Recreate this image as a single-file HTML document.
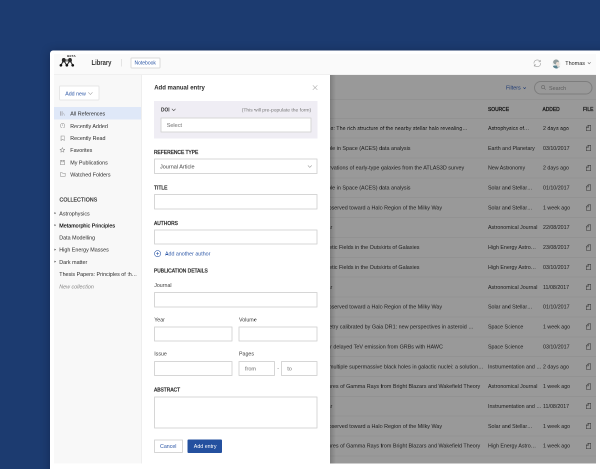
<!DOCTYPE html>
<html><head><meta charset="utf-8">
<style>
*{box-sizing:border-box;margin:0;padding:0}
html,body{width:600px;height:469px;overflow:hidden}
body{background:#1c3b70;font-family:"Liberation Sans",sans-serif;font-size:5.3px;color:#333;position:relative}
.abs,.t,.box,.rl,.fi{position:absolute}
.t{line-height:1;white-space:nowrap;transform:translateY(-50%)}
.win{left:50px;top:50.5px;width:560px;height:430px;background:#fff;border-radius:3px;box-shadow:0 1px 10px rgba(0,0,25,.32)}
.app{left:54px;top:54px;width:542px;height:409.5px;background:#f7f7f7}
.hdr{left:54px;top:54px;width:542px;height:21px;background:#fafafa;border-bottom:1px solid #f0f0f0}
.side{left:54px;top:75px;width:88px;height:388.5px;background:#f8f8f8}
.tbl{left:330px;top:75px;width:266px;height:388.5px;background:#fff;overflow:hidden}
.ov{left:330px;top:75px;width:266px;height:388.5px;background:rgba(0,0,0,.4)}
.ovs{left:330px;top:75px;width:6px;height:388.5px;background:linear-gradient(90deg,rgba(0,0,0,.18),rgba(0,0,0,0))}
.panel{left:141px;top:75px;width:189px;height:388.5px;background:#fff;border-left:1px solid #eee}
.rl{left:330px;width:266px;height:1px;background:#f3f3f3;transform:translateY(-50%)}
.box{background:#fff;border:1px solid #d6d6d6;border-radius:.6px}
.lbl{font-weight:normal;-webkit-text-stroke:.32px #333;font-size:5.3px;color:#333;transform:translateY(-50%) scaleX(.925);transform-origin:0 50%}
.sm{font-size:5.3px;color:#3c3c3c}
.fi{left:586px;width:5px;height:6px}
.nav{font-size:5.36px;color:#2b2b2b;left:70.3px}
.col{font-size:5.36px;color:#2b2b2b;left:59.3px}
.blue{color:#2a55a5}
.ph{color:#848484;-webkit-text-stroke:.1px #848484}
#w{position:absolute;left:0;top:0;width:600px;height:469px;overflow:hidden;zoom:2;transform:scale(.5);transform-origin:0 0;will-change:transform;background:#1c3b70}
.tt{font-size:5.4px}
</style></head><body><div id="w">
<div class="abs win"></div>
<div class="abs app"></div>
<div class="abs hdr"></div>

<!-- header -->
<svg class="abs" style="left:59px;top:57px;width:16px;height:11px" viewBox="0 0 16 11">
 <g stroke="#2a2a2a" stroke-width="1.05" stroke-linecap="round" fill="none">
  <path d="M1.9 8.3L4.7 3.4M4.7 3.4L7.85 8.3M7.85 8.3L11 3.4M11 3.4L13.75 8.3"/>
 </g>
 <rect x="5" y="2.2" width="6" height="2.4" fill="#8a8a8a"/>
 <ellipse cx="4.75" cy="3.2" rx="1.9" ry="2.2" fill="#2a2a2a"/><ellipse cx="11" cy="3.2" rx="1.9" ry="2.2" fill="#2a2a2a"/>
 <circle cx="1.9" cy="8.3" r="1.35" fill="#111"/><circle cx="7.85" cy="8.3" r="1.35" fill="#111"/><circle cx="13.75" cy="8.3" r="1.35" fill="#111"/>
</svg>
<div class="t" style="left:67.1px;top:56.1px;font-size:3px;letter-spacing:.2px;font-weight:bold;color:#222">BETA</div>
<div class="t" id="lib" style="left:91.7px;top:62.6px;font-size:7px;font-weight:bold;color:#333;transform:translateY(-50%) scaleX(.84);transform-origin:0 50%">Library</div>
<div class="abs" style="left:121px;top:59px;width:1px;height:7.5px;background:#e4e4e4"></div>
<div class="box" style="left:130.3px;top:57.4px;width:30.3px;height:10.9px;border-color:#dadada;border-radius:1.2px"></div>
<div class="t blue" id="nb" style="left:134.5px;top:62.8px;font-size:5px">Notebook</div>

<!-- refresh -->
<svg class="abs" style="left:533px;top:58.8px;width:8.6px;height:8.6px" viewBox="0 0 16 16" fill="none" stroke="#a2a2a2" stroke-width="1.15" stroke-linecap="round" stroke-linejoin="round">
 <path d="M1.8 8A6.2 6.2 0 0 1 13.4 4.9M13.7 2.3V5.2H10.8"/><path d="M14.2 8A6.2 6.2 0 0 1 2.6 11.1M2.3 13.7V10.8H5.2"/>
</svg>
<!-- avatar -->
<svg class="abs" style="left:552.2px;top:58.8px;width:8.8px;height:9.8px" viewBox="0 0 17 19">
 <defs><clipPath id="av"><ellipse cx="8.5" cy="9.5" rx="8" ry="9"/></clipPath></defs>
 <g clip-path="url(#av)"><rect width="17" height="19" fill="#eef0ef"/>
 <ellipse cx="7.8" cy="5.8" rx="5.6" ry="4.8" fill="#929d9e"/>
 <ellipse cx="11" cy="9.8" rx="3.3" ry="3.9" fill="#e9dcd2"/>
 <path d="M0 19C0 13.5 3 12.5 7 12.5S13 14 13.5 19Z" fill="#58818f"/><path d="M9.5 13L12 18.5L15 13.5Z" fill="#e4dcd6"/><path d="M13 14.5C15 14.5 16.5 16 17 19H13Z" fill="#5d8796"/></g>
</svg>
<div class="t" id="thomas" style="left:565.3px;top:63.1px;font-size:5.45px;color:#222">Thomas</div>
<svg class="abs" style="left:587.6px;top:62px;width:3.4px;height:2.4px" viewBox="0 0 10 7" fill="none" stroke="#555" stroke-width="1.6"><path d="M1 1L5 5.5L9 1"/></svg>

<!-- sidebar -->
<div class="abs side"></div>
<div class="box" style="left:59px;top:85.4px;width:40.6px;height:15.2px;border-color:#e6e6e6;border-radius:1.2px"></div>
<div class="t blue" id="addnew" style="left:65.2px;top:93.4px;font-size:5.3px">Add new</div>
<svg class="abs" style="left:88px;top:92.1px;width:4.8px;height:2.9px" viewBox="0 0 10 6" fill="none" stroke="#999" stroke-width="1.05"><path d="M.6 .6L5 5.2L9.4 .6"/></svg>

<div class="abs" style="left:54px;top:107.2px;width:87.5px;height:12.4px;background:#dfe8f8"></div>
<div class="t nav" style="top:113.4px">All References</div>
<div class="t nav" style="top:125.8px">Recently Added</div>
<div class="t nav" style="top:138px">Recently Read</div>
<div class="t nav" style="top:150.1px">Favorites</div>
<div class="t nav" style="top:162.3px">My Publications</div>
<div class="t nav" style="top:174.4px">Watched Folders</div>
<!-- nav icons -->
<svg class="abs" style="left:60px;top:111px;width:5px;height:5px" viewBox="0 0 10 10" fill="none" stroke="#a9abb3" stroke-width="1.1"><path d="M1.5 .6V9.4" stroke-width="2.6"/><path d="M5.3 .6V9.4M7 3.8L9.2 9.4"/></svg>
<svg class="abs" style="left:59.8px;top:123.2px;width:5.2px;height:5.2px" viewBox="0 0 10 10" fill="none" stroke="#8a8a8a" stroke-width="1"><circle cx="5" cy="5" r="4.2"/><path d="M5 2.6V5.3"/></svg>
<svg class="abs" style="left:60.3px;top:135.3px;width:4.4px;height:5.6px" viewBox="0 0 8 10" fill="none" stroke="#8a8a8a" stroke-width="1"><path d="M1 .8H7V9L4 6.8L1 9Z"/></svg>
<svg class="abs" style="left:59.6px;top:147.2px;width:5.8px;height:5.8px" viewBox="0 0 12 12" fill="none" stroke="#8a8a8a" stroke-width="1.1" stroke-linejoin="round"><path d="M6 1.2L7.5 4.5L11 4.9L8.4 7.2L9.1 10.7L6 8.9L2.9 10.7L3.6 7.2L1 4.9L4.5 4.5Z"/></svg>
<svg class="abs" style="left:60px;top:159.6px;width:5px;height:5.6px" viewBox="0 0 9 10" fill="none" stroke="#8a8a8a" stroke-width="1"><path d="M.8 1.5H8.2V9.2H.8Z"/><path d="M3 .8V4.2H6.2V.8"/></svg>
<svg class="abs" style="left:59.8px;top:172px;width:5.6px;height:4.8px" viewBox="0 0 11 9" fill="none" stroke="#8a8a8a" stroke-width="1"><path d="M.8 1H4.2L5.2 2.2H10.2V8.2H.8Z"/></svg>

<div class="t" id="colls" style="left:59.5px;top:200.1px;font-size:5.2px;letter-spacing:.1px;color:#333;-webkit-text-stroke:.22px #333">COLLECTIONS</div>
<div class="t col" style="top:213.3px">Astrophysics</div>
<div class="t col" style="top:225.3px;color:#111;text-shadow:0 0 .3px #111">Metamorphic Principles</div>
<div class="t col" style="top:237.6px">Data Modelling</div>
<div class="t col" style="top:249.7px">High Energy Masses</div>
<div class="t col" style="top:261.8px">Dark matter</div>
<div class="t col" style="top:274.2px">Thesis Papers: Principles of th…</div>
<div class="t col" style="top:286.3px;font-style:italic;color:#868686">New collection</div>
<svg class="abs" style="left:54.3px;top:212.2px;width:1.5px;height:2.3px" viewBox="0 0 3 4"><path d="M0 0L3 2L0 4Z" fill="#444"/></svg>
<svg class="abs" style="left:54.3px;top:224.2px;width:1.5px;height:2.3px" viewBox="0 0 3 4"><path d="M0 0L3 2L0 4Z" fill="#444"/></svg>
<svg class="abs" style="left:54.3px;top:248.6px;width:1.5px;height:2.3px" viewBox="0 0 3 4"><path d="M0 0L3 2L0 4Z" fill="#444"/></svg>
<svg class="abs" style="left:54.3px;top:260.7px;width:1.5px;height:2.3px" viewBox="0 0 3 4"><path d="M0 0L3 2L0 4Z" fill="#444"/></svg>

<!-- table -->
<div class="abs tbl"></div>
<div class="rl" style="top:99.7px"></div>
<div class="rl" style="top:118.3px"></div>
<div class="t" id="filters" style="left:506px;top:87.7px;font-size:5.4px;color:#2f5fc0">Filters</div>
<svg class="abs" style="left:522.8px;top:86.8px;width:3.2px;height:2.2px" viewBox="0 0 10 7" fill="none" stroke="#2f5fc0" stroke-width="1.8"><path d="M1 1L5 5.5L9 1"/></svg>
<div class="abs" style="left:534px;top:81px;width:58.6px;height:13.4px;border:1px solid #d0d0d0;border-radius:7px"></div>
<svg class="abs" style="left:541px;top:85.2px;width:5px;height:5px" viewBox="0 0 10 10" fill="none" stroke="#b4b4b4" stroke-width="1.3"><circle cx="4.2" cy="4.2" r="3.2"/><path d="M6.6 6.6L9.4 9.4"/></svg>
<div class="t" style="left:549px;top:87.8px;font-size:5.4px;color:#9c9c9c">Search</div>
<div class="t lbl" style="left:488px;top:109px">SOURCE</div>
<div class="t lbl" style="left:542.6px;top:109px">ADDED</div>
<div class="t lbl" style="left:583px;top:109px">FILE</div>
<div class="rl" style="top:138.16px"></div>
<div class="t tt" style="top:127.93px;right:132.3px">of galaxies: The rich structure of the nearby stellar halo revealing…</div>
<div class="t" style="top:127.93px;left:488px">Astrophysics of…</div>
<div class="t" style="top:127.93px;left:543px">2 days ago</div>
<svg class="fi" style="top:125.13px" viewBox="0 0 10 12"><path d="M4.4 0.6H9.4V11.4H0.6V4.4Z" fill="none" stroke="#626262" stroke-width="1.05"/><path d="M0.9 4.9H4.9V0.9" fill="none" stroke="#626262" stroke-width="1"/></svg>
<div class="rl" style="top:158.02px"></div>
<div class="t tt" style="top:147.79px;right:189.5px">Atomic Clock Ensemble in Space (ACES) data analysis</div>
<div class="t" style="top:147.79px;left:488px">Earth and Planetary</div>
<div class="t" style="top:147.79px;left:543px">03/10/2017</div>
<svg class="fi" style="top:144.99px" viewBox="0 0 10 12"><path d="M4.4 0.6H9.4V11.4H0.6V4.4Z" fill="none" stroke="#626262" stroke-width="1.05"/><path d="M0.9 4.9H4.9V0.9" fill="none" stroke="#626262" stroke-width="1"/></svg>
<div class="rl" style="top:177.88px"></div>
<div class="t tt" style="top:167.65px;right:135.8px">Integral-field observations of early-type galaxies from the ATLAS3D survey</div>
<div class="t" style="top:167.65px;left:488px">New Astronomy</div>
<div class="t" style="top:167.65px;left:543px">2 days ago</div>
<svg class="fi" style="top:164.85px" viewBox="0 0 10 12"><path d="M4.4 0.6H9.4V11.4H0.6V4.4Z" fill="none" stroke="#626262" stroke-width="1.05"/><path d="M0.9 4.9H4.9V0.9" fill="none" stroke="#626262" stroke-width="1"/></svg>
<div class="rl" style="top:197.74px"></div>
<div class="t tt" style="top:187.51px;right:189.5px">Atomic Clock Ensemble in Space (ACES) data analysis</div>
<div class="t" style="top:187.51px;left:488px">Solar and Stellar…</div>
<div class="t" style="top:187.51px;left:543px">01/10/2017</div>
<svg class="fi" style="top:184.71px" viewBox="0 0 10 12"><path d="M4.4 0.6H9.4V11.4H0.6V4.4Z" fill="none" stroke="#626262" stroke-width="1.05"/><path d="M0.9 4.9H4.9V0.9" fill="none" stroke="#626262" stroke-width="1"/></svg>
<div class="rl" style="top:217.60px"></div>
<div class="t tt" style="top:207.37px;right:157.9px">Gamma-Ray Emission observed toward a Halo Region of the Milky Way</div>
<div class="t" style="top:207.37px;left:488px">Solar and Stellar…</div>
<div class="t" style="top:207.37px;left:543px">1 week ago</div>
<svg class="fi" style="top:204.57px" viewBox="0 0 10 12"><path d="M4.4 0.6H9.4V11.4H0.6V4.4Z" fill="none" stroke="#626262" stroke-width="1.05"/><path d="M0.9 4.9H4.9V0.9" fill="none" stroke="#626262" stroke-width="1"/></svg>
<div class="rl" style="top:237.46px"></div>
<div class="t tt" style="top:227.23px;right:267.7px">The Large Scale Structure of the Quasar</div>
<div class="t" style="top:227.23px;left:488px">Astronomical Journal</div>
<div class="t" style="top:227.23px;left:543px">22/08/2017</div>
<svg class="fi" style="top:224.43px" viewBox="0 0 10 12"><path d="M4.4 0.6H9.4V11.4H0.6V4.4Z" fill="none" stroke="#626262" stroke-width="1.05"/><path d="M0.9 4.9H4.9V0.9" fill="none" stroke="#626262" stroke-width="1"/></svg>
<div class="rl" style="top:257.32px"></div>
<div class="t tt" style="top:247.09px;right:180.6px">The Evolution of Magnetic Fields in the Outskirts of Galaxies</div>
<div class="t" style="top:247.09px;left:488px">High Energy Astro…</div>
<div class="t" style="top:247.09px;left:543px">23/08/2017</div>
<svg class="fi" style="top:244.29px" viewBox="0 0 10 12"><path d="M4.4 0.6H9.4V11.4H0.6V4.4Z" fill="none" stroke="#626262" stroke-width="1.05"/><path d="M0.9 4.9H4.9V0.9" fill="none" stroke="#626262" stroke-width="1"/></svg>
<div class="rl" style="top:277.18px"></div>
<div class="t tt" style="top:266.95px;right:180.6px">The Evolution of Magnetic Fields in the Outskirts of Galaxies</div>
<div class="t" style="top:266.95px;left:488px">High Energy Astro…</div>
<div class="t" style="top:266.95px;left:543px">03/10/2017</div>
<svg class="fi" style="top:264.15px" viewBox="0 0 10 12"><path d="M4.4 0.6H9.4V11.4H0.6V4.4Z" fill="none" stroke="#626262" stroke-width="1.05"/><path d="M0.9 4.9H4.9V0.9" fill="none" stroke="#626262" stroke-width="1"/></svg>
<div class="rl" style="top:297.04px"></div>
<div class="t tt" style="top:286.81px;right:267.7px">The Large Scale Structure of the Quasar</div>
<div class="t" style="top:286.81px;left:488px">Astronomical Journal</div>
<div class="t" style="top:286.81px;left:543px">11/08/2017</div>
<svg class="fi" style="top:284.01px" viewBox="0 0 10 12"><path d="M4.4 0.6H9.4V11.4H0.6V4.4Z" fill="none" stroke="#626262" stroke-width="1.05"/><path d="M0.9 4.9H4.9V0.9" fill="none" stroke="#626262" stroke-width="1"/></svg>
<div class="rl" style="top:316.90px"></div>
<div class="t tt" style="top:306.67px;right:157.9px">Gamma-Ray Emission observed toward a Halo Region of the Milky Way</div>
<div class="t" style="top:306.67px;left:488px">Solar and Stellar…</div>
<div class="t" style="top:306.67px;left:543px">01/10/2017</div>
<svg class="fi" style="top:303.87px" viewBox="0 0 10 12"><path d="M4.4 0.6H9.4V11.4H0.6V4.4Z" fill="none" stroke="#626262" stroke-width="1.05"/><path d="M0.9 4.9H4.9V0.9" fill="none" stroke="#626262" stroke-width="1"/></svg>
<div class="rl" style="top:336.76px"></div>
<div class="t tt" style="top:326.53px;right:126.4px">Ground-based astrometry calibrated by Gaia DR1: new perspectives in asteroid …</div>
<div class="t" style="top:326.53px;left:488px">Space Science</div>
<div class="t" style="top:326.53px;left:543px">1 week ago</div>
<svg class="fi" style="top:323.73px" viewBox="0 0 10 12"><path d="M4.4 0.6H9.4V11.4H0.6V4.4Z" fill="none" stroke="#626262" stroke-width="1.05"/><path d="M0.9 4.9H4.9V0.9" fill="none" stroke="#626262" stroke-width="1"/></svg>
<div class="rl" style="top:356.62px"></div>
<div class="t tt" style="top:346.39px;right:157.1px">A dedicated search for delayed TeV emission from GRBs with HAWC</div>
<div class="t" style="top:346.39px;left:488px">Space Science</div>
<div class="t" style="top:346.39px;left:543px">03/10/2017</div>
<svg class="fi" style="top:343.59px" viewBox="0 0 10 12"><path d="M4.4 0.6H9.4V11.4H0.6V4.4Z" fill="none" stroke="#626262" stroke-width="1.05"/><path d="M0.9 4.9H4.9V0.9" fill="none" stroke="#626262" stroke-width="1"/></svg>
<div class="rl" style="top:376.48px"></div>
<div class="t tt" style="top:366.25px;right:116.5px">The final parsec problem of multiple supermassive black holes in galactic nuclei: a solution…</div>
<div class="t" style="top:366.25px;left:488px">Instrumentation and …</div>
<div class="t" style="top:366.25px;left:543px">2 days ago</div>
<svg class="fi" style="top:363.45px" viewBox="0 0 10 12"><path d="M4.4 0.6H9.4V11.4H0.6V4.4Z" fill="none" stroke="#626262" stroke-width="1.05"/><path d="M0.9 4.9H4.9V0.9" fill="none" stroke="#626262" stroke-width="1"/></svg>
<div class="rl" style="top:396.34px"></div>
<div class="t tt" style="top:386.11px;right:119.8px">Spectral Signatures of Gamma Rays from Bright Blazars and Wakefield Theory</div>
<div class="t" style="top:386.11px;left:488px">Astronomical Journal</div>
<div class="t" style="top:386.11px;left:543px">1 week ago</div>
<svg class="fi" style="top:383.31px" viewBox="0 0 10 12"><path d="M4.4 0.6H9.4V11.4H0.6V4.4Z" fill="none" stroke="#626262" stroke-width="1.05"/><path d="M0.9 4.9H4.9V0.9" fill="none" stroke="#626262" stroke-width="1"/></svg>
<div class="rl" style="top:416.20px"></div>
<div class="t tt" style="top:405.97px;right:267.7px">The Large Scale Structure of the Quasar</div>
<div class="t" style="top:405.97px;left:488px">Instrumentation and …</div>
<div class="t" style="top:405.97px;left:543px">11/08/2017</div>
<svg class="fi" style="top:403.17px" viewBox="0 0 10 12"><path d="M4.4 0.6H9.4V11.4H0.6V4.4Z" fill="none" stroke="#626262" stroke-width="1.05"/><path d="M0.9 4.9H4.9V0.9" fill="none" stroke="#626262" stroke-width="1"/></svg>
<div class="rl" style="top:436.06px"></div>
<div class="t tt" style="top:425.83px;right:157.9px">Gamma-Ray Emission observed toward a Halo Region of the Milky Way</div>
<div class="t" style="top:425.83px;left:488px">Solar and Stellar…</div>
<div class="t" style="top:425.83px;left:543px">1 week ago</div>
<svg class="fi" style="top:423.03px" viewBox="0 0 10 12"><path d="M4.4 0.6H9.4V11.4H0.6V4.4Z" fill="none" stroke="#626262" stroke-width="1.05"/><path d="M0.9 4.9H4.9V0.9" fill="none" stroke="#626262" stroke-width="1"/></svg>
<div class="rl" style="top:455.92px"></div>
<div class="t tt" style="top:445.69px;right:119.8px">Spectral Signatures of Gamma Rays from Bright Blazars and Wakefield Theory</div>
<div class="t" style="top:445.69px;left:488px">High Energy Astro…</div>
<div class="t" style="top:445.69px;left:543px">1 week ago</div>
<svg class="fi" style="top:442.89px" viewBox="0 0 10 12"><path d="M4.4 0.6H9.4V11.4H0.6V4.4Z" fill="none" stroke="#626262" stroke-width="1.05"/><path d="M0.9 4.9H4.9V0.9" fill="none" stroke="#626262" stroke-width="1"/></svg>
<div class="abs ov"></div>
<div class="abs ovs"></div>

<!-- panel -->
<div class="abs panel"></div>
<div class="t" id="ame" style="left:154.2px;top:87.6px;font-size:6px;font-weight:bold;color:#2a2a2a">Add manual entry</div>
<svg class="abs" style="left:312.6px;top:85.2px;width:5.2px;height:5.2px" viewBox="0 0 10 10" fill="none" stroke="#777" stroke-width=".9"><path d="M.6 .6L9.4 9.4M9.4 .6L.6 9.4"/></svg>

<div class="abs" style="left:154.2px;top:101.2px;width:163.4px;height:37.2px;background:#efedf4"></div>
<div class="t lbl" id="doi" style="left:160.8px;top:110px;font-size:5.2px;font-weight:bold;-webkit-text-stroke:0">DOI</div>
<svg class="abs" style="left:171.7px;top:108.7px;width:4.4px;height:2.6px" viewBox="0 0 10 6" fill="none" stroke="#444" stroke-width="1.35"><path d="M.7 .7L5 5.2L9.3 .7"/></svg>
<div class="t" id="prepop" style="left:241.7px;top:110.1px;font-size:4.95px;color:#777">(This will pre-populate the form)</div>
<div class="box" style="left:160.5px;top:117.5px;width:151px;height:15px"></div>
<div class="t ph" style="left:166.7px;top:124.9px;font-size:5.5px">Select</div>

<div class="t lbl" id="reftype" style="left:154.2px;top:151.8px">REFERENCE TYPE</div>
<div class="box" style="left:154.2px;top:158.7px;width:163.4px;height:15.1px"></div>
<div class="t" style="left:160px;top:166.6px;font-size:5.5px;color:#444">Journal Article</div>
<svg class="abs" style="left:307.6px;top:165.2px;width:4.6px;height:3px" viewBox="0 0 10 6" fill="none" stroke="#888" stroke-width="1.1"><path d="M.8 .8L5 5L9.2 .8"/></svg>

<div class="t lbl" style="left:154.2px;top:187.3px">TITLE</div>
<div class="box" style="left:154.2px;top:194.2px;width:163.4px;height:15.1px"></div>

<div class="t lbl" style="left:154.2px;top:222.8px">AUTHORS</div>
<div class="box" style="left:154.2px;top:229.6px;width:163.4px;height:15.1px"></div>

<svg class="abs" style="left:154.2px;top:250px;width:7.2px;height:7.2px" viewBox="0 0 14 14" fill="none" stroke="#2a55a5" stroke-width="1.1"><circle cx="7" cy="7" r="6"/><path d="M7 4V10M4 7H10"/></svg>
<div class="t blue" id="aaa" style="left:165px;top:253.6px;font-size:5.3px">Add another author</div>

<div class="t lbl" id="pubd" style="left:154.2px;top:270.4px">PUBLICATION DETAILS</div>
<div class="t sm" style="left:154.2px;top:285.1px">Journal</div>
<div class="box" style="left:154.2px;top:292.2px;width:163.4px;height:15.1px"></div>
<div class="t sm" style="left:154.2px;top:319.4px">Year</div>
<div class="t sm" style="left:239px;top:319.4px">Volume</div>
<div class="box" style="left:154.2px;top:326.3px;width:78.4px;height:15.1px"></div>
<div class="box" style="left:238.7px;top:326.3px;width:79px;height:15.1px"></div>
<div class="t sm" style="left:154.2px;top:353.7px">Issue</div>
<div class="t sm" style="left:239px;top:353.7px">Pages</div>
<div class="box" style="left:154.2px;top:360.8px;width:78.4px;height:15.1px"></div>
<div class="box" style="left:238.7px;top:360.8px;width:36.4px;height:15.1px"></div>
<div class="box" style="left:281.2px;top:360.8px;width:36.5px;height:15.1px"></div>
<div class="t ph" style="left:245px;top:368.6px;font-size:5.5px">from</div>
<div class="t ph" style="left:287.2px;top:368.6px;font-size:5.5px">to</div>
<div class="t ph" style="left:277.3px;top:368.4px;font-size:5.2px">-</div>

<div class="t lbl" style="left:154.2px;top:389.3px">ABSTRACT</div>
<div class="box" style="left:154.2px;top:396.3px;width:163.4px;height:32.1px"></div>

<div class="box" style="left:154.2px;top:439.3px;width:28.9px;height:13.5px"></div>
<div class="t blue" id="cancel" style="left:160px;top:446.2px;font-size:5.3px">Cancel</div>
<div class="abs" style="left:187.7px;top:439.3px;width:34.4px;height:13.5px;background:#24509f;border-radius:1px"></div>
<div class="t" id="addentry" style="left:193.8px;top:446.2px;font-size:5.3px;color:#fff">Add entry</div>
</div></body></html>
